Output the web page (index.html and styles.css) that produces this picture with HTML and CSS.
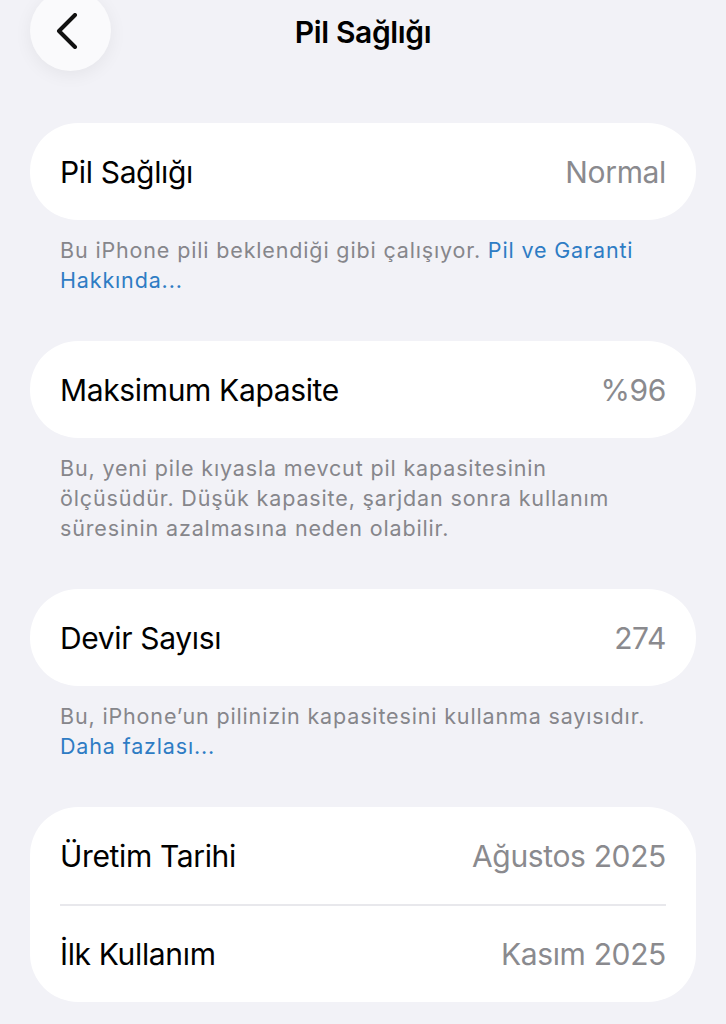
FILE: index.html
```html
<!DOCTYPE html>
<html lang="tr">
<head>
<meta charset="utf-8">
<title>Pil Sağlığı</title>
<link rel="stylesheet" href="styles.css">
</head>
<body>
<div class="screen">
  <header class="nav">
    <div class="back">
      <svg width="24" height="36" viewBox="0 0 24 36" class="chev"><path d="M20 2 L4 18 L20 34" fill="none" stroke="#111" stroke-width="4" stroke-linecap="round" stroke-linejoin="round"/></svg>
    </div>
    <h1 class="title">Pil Sağlığı</h1>
  </header>

  <section class="group">
    <div class="card">
      <div class="row"><span class="label">Pil Sağlığı</span><span class="value">Normal</span></div>
    </div>
    <p class="foot">Bu iPhone pili beklendiği gibi çalışıyor. <span class="link">Pil ve Garanti Hakkında...</span></p>
  </section>

  <section class="group">
    <div class="card">
      <div class="row"><span class="label">Maksimum Kapasite</span><span class="value">%96</span></div>
    </div>
    <p class="foot">Bu, yeni pile kıyasla mevcut pil kapasitesinin ölçüsüdür. Düşük kapasite, şarjdan sonra kullanım süresinin azalmasına neden olabilir.</p>
  </section>

  <section class="group">
    <div class="card">
      <div class="row"><span class="label">Devir Sayısı</span><span class="value">274</span></div>
    </div>
    <p class="foot">Bu, iPhone’un pilinizin kapasitesini kullanma sayısıdır. <span class="link">Daha fazlası...</span></p>
  </section>

  <section class="group">
    <div class="card">
      <div class="row"><span class="label">Üretim Tarihi</span><span class="value">Ağustos 2025</span></div>
      <div class="divider"></div>
      <div class="row"><span class="label">İlk Kullanım</span><span class="value">Kasım 2025</span></div>
    </div>
  </section>
</div>
</body>
</html>
```

FILE: styles.css
```css
html, body {
  margin: 0;
  padding: 0;
  background: #f2f2f7;
}
body {
  font-family: Inter, "Noto Sans", sans-serif;
  color: #000;
  width: 726px;
  height: 1024px;
  overflow: hidden;
}
.screen {
  padding: 0 30px;
}
.nav {
  position: relative;
  height: 123px;
  display: flex;
  justify-content: center;
}
.back {
  position: absolute;
  left: 0;
  top: -10px;
  width: 81px;
  height: 81px;
  border-radius: 50%;
  background: #fafafc;
  box-shadow: 0 4px 18px rgba(0,0,0,0.06);
  display: flex;
  align-items: center;
  justify-content: center;
}
.chev {
  margin-top: 0;
  margin-left: -7px;
}
.title {
  margin: 0;
  padding-top: 14px;
  font-size: 30px;
  font-weight: 600;
  line-height: 36px;
  letter-spacing: -0.35px;
}
.group {
  margin-bottom: 46px;
}
.card {
  background: #fff;
  border-radius: 48px;
  padding: 0 30px;
}
.row {
  height: 97px;
  display: flex;
  align-items: center;
  justify-content: space-between;
  font-size: 30px;
  letter-spacing: -0.35px;
}
.label {
  color: #000;
}
.value {
  color: #8a8a8e;
}
.divider {
  height: 2px;
  background: #e8e8ec;
}
.card .divider + .row {
  height: 96px;
}
.foot {
  margin: 0;
  padding: 15px 30px 0;
  font-size: 21.5px;
  line-height: 30px;
  letter-spacing: 0.85px;
  color: #86868b;
}
.link {
  color: #2e7cc4;
}
```
